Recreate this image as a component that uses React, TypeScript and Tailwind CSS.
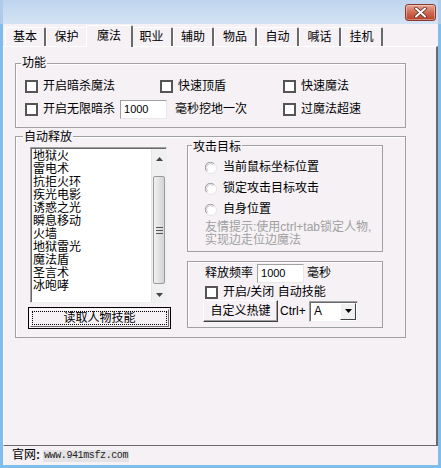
import React from "react";

const BG = "bg-[#f5f1f5]";

function Checkbox() {
  return <span className="inline-block w-[13px] h-[13px] border-2 border-[#555555] bg-white shrink-0" />;
}

function Radio() {
  return (
    <svg width="12" height="12" viewBox="0 0 12 12" className="shrink-0">
      <circle cx="6" cy="6" r="5.5" fill="#ffffff" stroke="#e4e4e4" />
      <path d="M1.8 9.2 A4.8 4.8 0 0 1 9.2 1.8" fill="none" stroke="#9a9a9a" strokeWidth="1" />
      <path d="M2.8 8.4 A3.6 3.6 0 0 1 8.4 2.8" fill="none" stroke="#d0d0d0" strokeWidth="1" />
    </svg>
  );
}

function Group({
  title,
  titleClass,
  className,
  children,
}: {
  title?: string;
  titleClass?: string;
  className: string;
  children?: React.ReactNode;
}) {
  return (
    <div className={"relative border border-[#a0a0a0] shadow-[inset_1px_1px_0_#ffffff] " + className}>
      {title && (
        <span className={"absolute px-[1px] leading-[14px] whitespace-nowrap " + BG + " " + (titleClass ?? "")}>
          {title}
        </span>
      )}
      {children}
    </div>
  );
}

function TextBox({ value, className }: { value: string; className: string }) {
  return (
    <div
      className={
        "flex items-center bg-white border border-t-[#a0a0a0] border-l-[#a0a0a0] border-b-[#e8e8e8] border-r-[#e8e8e8] pl-[3px] text-[11px] font-['Liberation_Sans',sans-serif] " +
        className
      }
    >
      {value}
    </div>
  );
}

const tabs: { label: string; w: string; sel?: boolean }[] = [
  { label: "基本", w: "w-[41px]" },
  { label: "保护", w: "w-[42px]" },
  { label: "魔法", w: "w-[47px]", sel: true },
  { label: "职业", w: "w-[42px]" },
  { label: "辅助", w: "w-[41px]" },
  { label: "物品", w: "w-[43px]" },
  { label: "自动", w: "w-[42px]" },
  { label: "喊话", w: "w-[42px]" },
  { label: "挂机", w: "w-[42px]" },
];

const skills = ["地狱火", "雷电术", "抗拒火环", "疾光电影", "诱惑之光", "瞬息移动", "火墙", "地狱雷光", "魔法盾", "圣言术", "冰咆哮"];

export default function App() {
  return (
    <div className="w-[441px] h-[468px] flex flex-col bg-[#7fbdec] text-[12px] text-black font-['Liberation_Sans','Noto_Sans_CJK_SC',sans-serif] overflow-hidden">
      {/* title bar */}
      <div className="h-[24px] flex justify-end items-start bg-gradient-to-b from-[#bed4ed] to-[#d4e3f4] border-l-[3px] border-r-[3px] border-[#aecbea]">
        <div className="mt-[4px] mr-[2px] w-[31px] h-[17px] rounded-[3px] border border-[#8a3b2e] bg-gradient-to-b from-[#e4a595] via-[#cf6a52] to-[#b8402a] flex items-center justify-center shadow-[inset_0_0_0_1px_rgba(255,255,255,0.35)]">
          <svg width="13" height="11" viewBox="0 0 13 11">
            <path d="M2 1.5 L11 9.5 M11 1.5 L2 9.5" stroke="#5a2a22" strokeWidth="3.6" strokeLinecap="round" />
            <path d="M2 1.5 L11 9.5 M11 1.5 L2 9.5" stroke="#ffffff" strokeWidth="2" strokeLinecap="round" />
          </svg>
        </div>
      </div>

      {/* client */}
      <div className={"flex-1 mx-[3px] mb-[3px] flex flex-col " + BG}>
        {/* tabs */}
        <div className="h-[22px] flex items-end pl-[2px]">
          {tabs.map((t) =>
            t.sel ? (
              <div
                key={t.label}
                className={
                  t.w +
                  " -mx-[2px] h-[22px] -mb-[1px] relative z-10 flex items-center justify-center pb-[1px] border-l border-t border-white border-r-2 border-r-[#6a6a6a] rounded-t-[2px] " +
                  BG
                }
              >
                {t.label}
              </div>
            ) : (
              <div
                key={t.label}
                className={
                  t.w +
                  " h-[19px] flex items-center justify-center border-l border-t border-white border-r-2 border-r-[#6a6a6a] rounded-t-[2px]"
                }
              >
                {t.label}
              </div>
            )
          )}
        </div>

        {/* panel */}
        <div className="h-[400px] border-t border-l border-white border-r-2 border-r-[#6a6a6a] border-b border-b-[#6a6a6a] pl-[11px] pt-[16px]">
          {/* 功能 */}
          <Group title="功能" titleClass="left-[5px] top-[-8px]" className="w-[391px] h-[65px]">
            <div className="mt-[16px] pl-[9px] h-[13px] flex items-center">
              <div className="w-[135px] flex items-center gap-[5px]">
                <Checkbox />
                <span className="leading-[13px]">开启暗杀魔法</span>
              </div>
              <div className="w-[123px] flex items-center gap-[5px]">
                <Checkbox />
                <span className="leading-[13px]">快速顶盾</span>
              </div>
              <div className="flex items-center gap-[5px]">
                <Checkbox />
                <span className="leading-[13px]">快速魔法</span>
              </div>
            </div>
            <div className="mt-[7px] pl-[9px] h-[19px] flex items-center">
              <div className="w-[258px] flex items-center">
                <Checkbox />
                <span className="ml-[5px] leading-[13px]">开启无限暗杀</span>
                <TextBox value="1000" className="ml-[5px] w-[47px] h-[19px]" />
                <span className="ml-[8px] leading-[13px]">毫秒挖地一次</span>
              </div>
              <div className="flex items-center gap-[5px]">
                <Checkbox />
                <span className="leading-[13px]">过魔法超速</span>
              </div>
            </div>
          </Group>

          {/* 自动释放 */}
          <Group title="自动释放" titleClass="left-[7px] top-[-7px]" className="mt-[8px] w-[391px] h-[202px]">
            <div className="flex items-start pl-[12px]">
              {/* left column */}
              <div className="w-[143px] pt-[10px] flex flex-col">
                <div className="ml-[2px] w-[137px] h-[156px] flex bg-white border border-t-[#a0a0a0] border-l-[#a0a0a0] border-b-[#f0f0f0] border-r-[#f0f0f0] shadow-[inset_1px_1px_0_#696969]">
                  <div className="flex-1 pl-[2px] pt-[2px] flex flex-col">
                    {skills.map((s) => (
                      <div key={s} className="h-[13px] leading-[13px] whitespace-nowrap">
                        {s}
                      </div>
                    ))}
                  </div>
                  <div className="w-[15px] mt-[1px] flex flex-col bg-[#f0f0f0] border-l border-[#e6e6e6]">
                    <div className="h-[27px] flex justify-center pt-[8px]">
                      <svg width="7" height="4" viewBox="0 0 7 4">
                        <path d="M0 4 L3.5 0 L7 4 Z" fill="#444" />
                      </svg>
                    </div>
                    <div className="h-[108px] mx-[1px] rounded-[2px] border border-[#9a9a9a] bg-gradient-to-r from-[#f2f2f2] via-[#e2e2e2] to-[#d4d4d4] flex flex-col items-center justify-center gap-[2px]">
                      <div className="w-[7px] h-[1px] bg-[#555]" />
                      <div className="w-[7px] h-[1px] bg-[#555]" />
                      <div className="w-[7px] h-[1px] bg-[#555]" />
                    </div>
                    <div className="flex-1 flex justify-center items-end pb-[5px]">
                      <svg width="7" height="4" viewBox="0 0 7 4">
                        <path d="M0 0 L3.5 4 L7 0 Z" fill="#444" />
                      </svg>
                    </div>
                  </div>
                </div>
                <div className="mt-[4px] w-[143px] h-[22px] border border-black p-[1px]">
                  <div className="w-full h-full border border-t-white border-l-white border-b-[#6a6a6a] border-r-[#6a6a6a] p-[1px]">
                    <div className="w-full h-full border border-dotted border-black flex items-center justify-center leading-[13px]">
                      读取人物技能
                    </div>
                  </div>
                </div>
              </div>

              {/* right column */}
              <div className="ml-[16px] pt-[8px] flex flex-col">
                <Group title="攻击目标" titleClass="left-[4px] top-[-6px]" className="w-[196px] h-[107px]">
                  <div className="pt-[11px] pl-[17px] flex flex-col">
                    {["当前鼠标坐标位置", "锁定攻击目标攻击", "自身位置"].map((r) => (
                      <div key={r} className="h-[21px] flex items-center gap-[6px]">
                        <Radio />
                        <span className="leading-[13px]">{r}</span>
                      </div>
                    ))}
                    <div className="mt-[1px] text-[#a0a0a0] leading-[13px] whitespace-nowrap">
                      友情提示:使用ctrl+tab锁定人物,
                      <br />
                      实现边走位边魔法
                    </div>
                  </div>
                </Group>
                <Group className="mt-[9px] w-[196px] h-[67px]">
                  <div className="mt-[2px] pl-[17px] h-[19px] flex items-center">
                    <span className="leading-[13px]">释放频率</span>
                    <TextBox value="1000" className="ml-[4px] w-[47px] h-[19px]" />
                    <span className="ml-[3px] leading-[13px]">毫秒</span>
                  </div>
                  <div className="mt-[3px] pl-[17px] h-[13px] flex items-center gap-[5px]">
                    <Checkbox />
                    <span className="leading-[13px] whitespace-nowrap">开启/关闭 自动技能</span>
                  </div>
                  <div className="mt-[1px] pl-[15px] h-[22px] flex items-center">
                    <div className="w-[75px] h-[22px] border border-t-white border-l-white border-b-[#404040] border-r-[#404040] shadow-[inset_-1px_-1px_0_#a0a0a0] flex items-center justify-center leading-[13px]">
                      自定义热键
                    </div>
                    <span className="ml-[2px] w-[29px] leading-[13px]">Ctrl+</span>
                    <div className="w-[49px] h-[21px] flex bg-white border border-t-[#a0a0a0] border-l-[#a0a0a0] border-b-[#f0f0f0] border-r-[#f0f0f0] shadow-[inset_1px_1px_0_#696969]">
                      <span className="flex-1 pl-[4px] pt-[3px] leading-[13px]">A</span>
                      <div className="w-[16px] m-[1px] border border-t-white border-l-white border-b-[#404040] border-r-[#404040] bg-[#f0f0f0] flex items-center justify-center">
                        <svg width="7" height="4" viewBox="0 0 7 4">
                          <path d="M0 0 L3.5 4 L7 0 Z" fill="#000" />
                        </svg>
                      </div>
                    </div>
                  </div>
                </Group>
              </div>
            </div>
          </Group>
        </div>

        {/* footer */}
        <div className="flex-1 flex items-center pl-[9px]">
          <span className="leading-[13px]">官网</span>
          <span className="font-bold leading-[13px] mr-[2px]">:</span>
          <span className="ml-[1px] px-[1px] bg-[#e6e3e6] text-[#222] text-[10px] tracking-[-0.4px] leading-[12px] font-['Liberation_Mono',monospace]">
            www.941msfz.com
          </span>
        </div>
      </div>
    </div>
  );
}
